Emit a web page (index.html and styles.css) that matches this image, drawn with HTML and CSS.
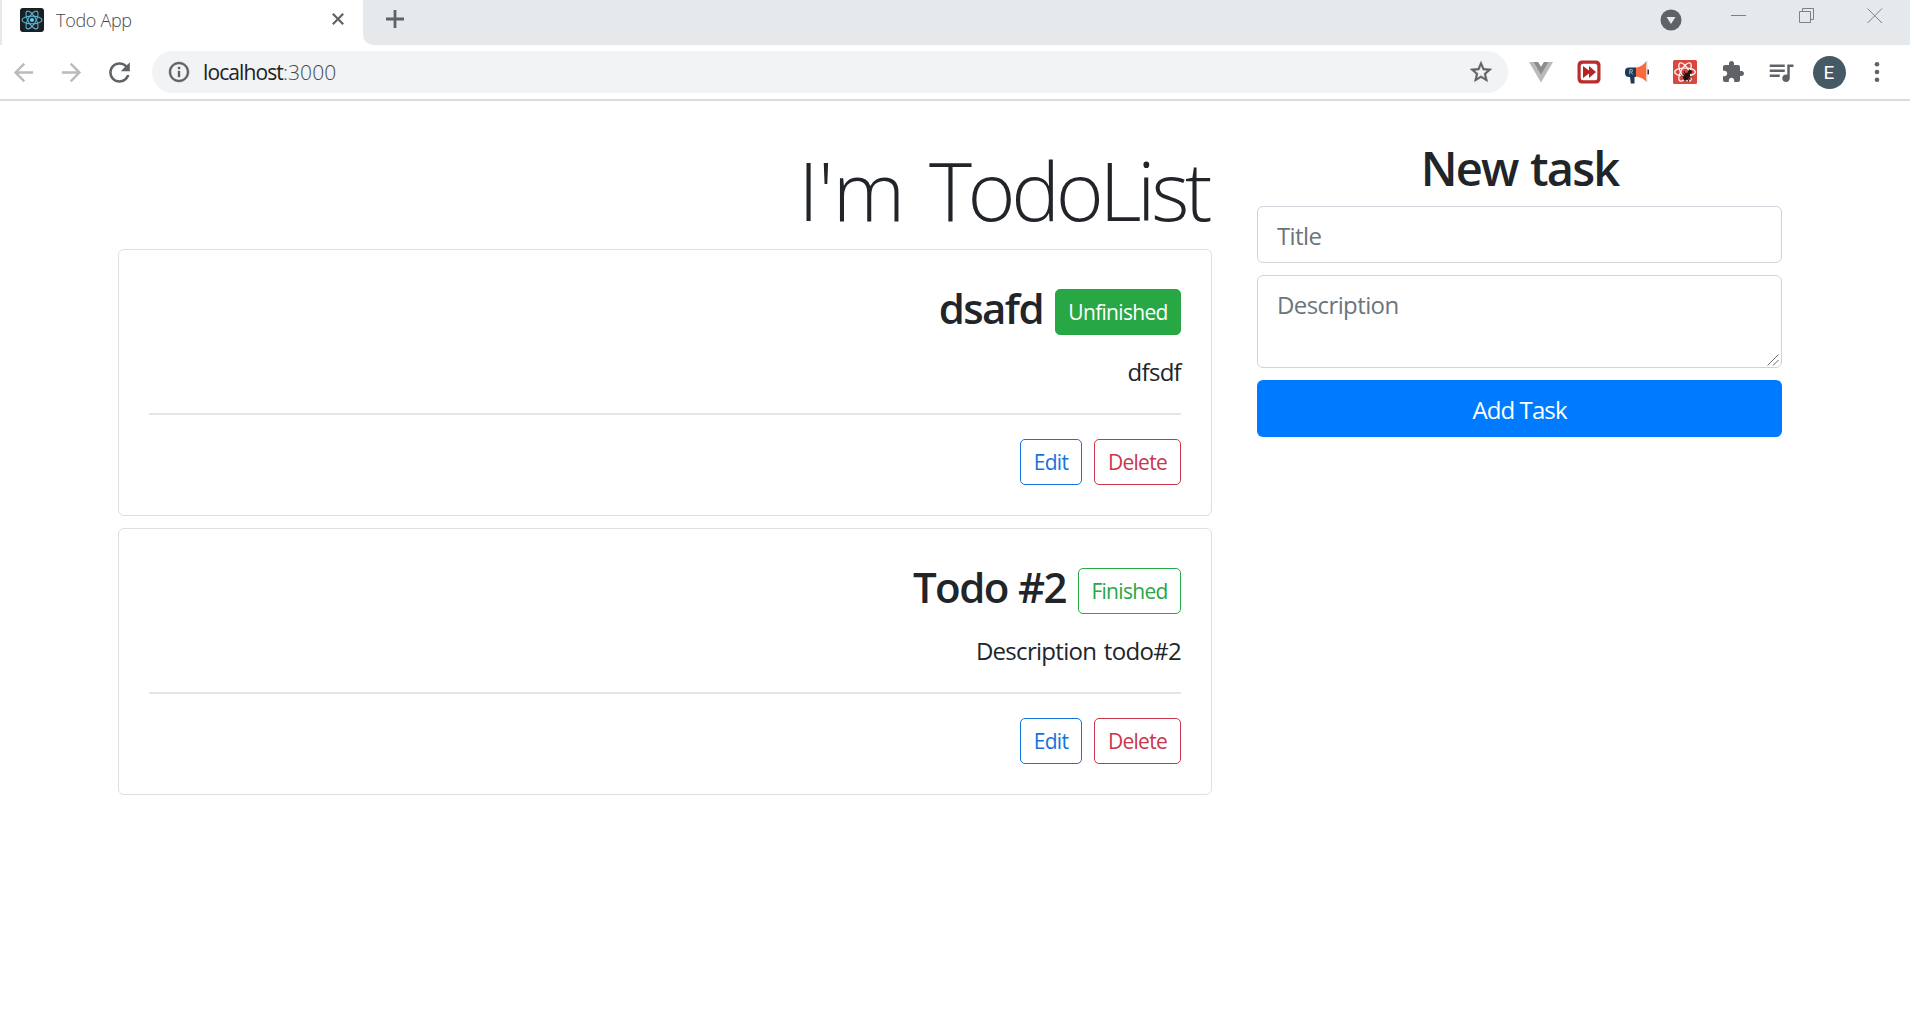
FILE: index.html
```html
<!DOCTYPE html>
<html lang="en">
<head>
<meta charset="utf-8">
<title>Todo App</title>
<link rel="stylesheet" href="styles.css">
</head>
<body>
<header class="browser">
  <div class="tabstrip">
    <div class="tab">
      <svg class="favicon" width="24" height="24" viewBox="0 0 24 24"><rect width="24" height="24" rx="3" fill="#1c1f22"/><g fill="none" stroke="#57b5d3" stroke-width="1.1"><ellipse cx="12" cy="12" rx="10" ry="3.9"/><ellipse cx="12" cy="12" rx="10" ry="3.9" transform="rotate(60 12 12)"/><ellipse cx="12" cy="12" rx="10" ry="3.9" transform="rotate(120 12 12)"/></g><circle cx="12" cy="12" r="2.1" fill="#61cbec"/></svg>
      <span class="tab-title">Todo App</span>
      <svg class="tab-close" width="12" height="12" viewBox="0 0 12 12"><path d="M.8.8l10.4 10.4M11.2.8L.8 11.2" stroke="#5f6368" stroke-width="2.2"/></svg>
    </div>
    <div class="strip">
      <svg class="new-tab" width="18" height="18" viewBox="0 0 18 18"><path d="M9 0v18M0 9h18" stroke="#5f6368" stroke-width="2.8"/></svg>
      <div class="window-controls">
        <svg width="22" height="22" viewBox="0 0 22 22"><circle cx="11" cy="11" r="10.5" fill="#5f6368"/><path d="M6.5 8h9L11 15z" fill="#e8eaed"/></svg>
        <svg class="win" width="16" height="16" viewBox="0 0 16 16"><path d="M0 7.5h15" stroke="#7d8184"/></svg>
        <svg class="win" width="16" height="16" viewBox="0 0 16 16"><path d="M.5 3.5h11v11H.5zM3.5 3.5v-3h11v11h-3" fill="none" stroke="#7d8184"/></svg>
        <svg class="win" width="16" height="16" viewBox="0 0 16 16"><path d="M.5.5l14.500 14.500M15 .5L.5 15" stroke="#7d8184"/></svg>
      </div>
    </div>
  </div>
  <div class="toolbar">
    <div class="slots nav">
      <span><svg width="29" height="29" viewBox="0 0 24 24" fill="#b9bbbd"><path d="M20 11H7.830l5.590-5.590L12 4l-8 8 8 8 1.410-1.410L7.830 13H20v-2z"/></svg></span>
      <span><svg width="29" height="29" viewBox="0 0 24 24" fill="#b9bbbd"><path d="M12 4l-1.410 1.410L16.170 11H4v2h12.170l-5.580 5.590L12 20l8-8z"/></svg></span>
      <span><svg width="31" height="31" viewBox="0 0 24 24" fill="#5f6368"><path d="M17.650 6.350C16.200 4.900 14.210 4 12 4c-4.420 0-7.990 3.580-7.990 8s3.570 8 7.990 8c3.730 0 6.840-2.550 7.730-6h-2.080c-.82 2.330-3.040 4-5.650 4-3.310 0-6-2.690-6-6s2.690-6 6-6c1.660 0 3.140.69 4.220 1.780L13 11h7V4l-2.350 2.350z"/></svg></span>
    </div>
    <div class="omnibox">
      <svg width="24" height="24" viewBox="0 0 24 24" fill="#5f6368"><path d="M11 7h2v2h-2zm0 4h2v6h-2zm1-9C6.480 2 2 6.480 2 12s4.480 10 10 10 10-4.480 10-10S17.520 2 12 2zm0 18c-4.410 0-8-3.590-8-8s3.590-8 8-8 8 3.590 8 8-3.590 8-8 8z" stroke="#5f6368" stroke-width=".4"/></svg>
      <span class="url"><span class="host">localhost</span><span class="port">:3000</span></span>
      <svg class="star" width="26" height="26" viewBox="0 0 24 24" fill="#5f6368"><path d="M22 9.240l-7.190-.62L12 2 9.190 8.630 2 9.240l5.460 4.730L5.820 21 12 17.270 18.180 21l-1.630-7.030L22 9.240zM12 15.400l-3.760 2.270 1-4.280-3.320-2.880 4.380-.38L12 6.100l1.710 4.040 4.380.38-3.320 2.880 1 4.280L12 15.400z" stroke="#5f6368" stroke-width=".4"/></svg>
    </div>
    <div class="slots">
      <span><svg width="24" height="24" viewBox="0 0 24 24"><path d="M0 2h9l3 5 3-5h9L12 22.500z" fill="#b9bab9"/><path d="M4.700 2H9l3 5 3-5h4.300L12 14.500z" fill="#8b8d8c"/></svg></span>
      <span><svg width="24" height="24" viewBox="0 0 24 24"><rect x=".5" y=".5" width="23" height="23" rx="4.500" fill="#b92d2d"/><rect x="3.700" y="3.700" width="16.600" height="16.600" rx="2.500" fill="#fff"/><path d="M6 6l6 4.500V6l7 6-7 6v-4.500L6 18z" fill="#b32424"/></svg></span>
      <span><svg width="24" height="24" viewBox="0 0 24 24"><path d="M22 9.500h1a2.500 2.500 0 0 1 0 5h-1z" fill="#26394d"/><path d="M11 7.500C16 7 19 4 21.500 1v21c-2.500-3-6-5-10.500-5.500z" fill="#fa6a3c"/><path d="M21.300 1h1.200v21h-1.200z" fill="#e9d6cc"/><path d="M4 7.500h7v9.500H9.500v6.500H5.800L5 17H4a4 4 0 0 1-4-4v-1.500a4 4 0 0 1 4-4z" fill="#1f3a56"/><path d="M4.700 14.500v-5h2.600v2.300H4.700M6 12l1.700 2.500" fill="none" stroke="#8fb5cf" stroke-width=".9"/></svg></span>
      <span><svg width="24" height="24" viewBox="0 0 24 24"><rect width="24" height="24" rx="1.500" fill="#d8483e"/><g fill="none" stroke="#fff" stroke-width="1.200"><ellipse cx="12" cy="12" rx="10.300" ry="4"/><ellipse cx="12" cy="12" rx="10.300" ry="4" transform="rotate(60 12 12)"/><ellipse cx="12" cy="12" rx="10.300" ry="4" transform="rotate(120 12 12)"/></g><g transform="rotate(35 14 15)" fill="#25120f"><ellipse cx="14.500" cy="16.500" rx="2.800" ry="4.300"/><circle cx="14.500" cy="10.800" r="2"/><path d="M9.500 13.500l10 6M9.500 19.500l10-6M9.500 16.500h10" stroke="#25120f" stroke-width="1"/></g></svg></span>
      <span><svg width="24" height="24" viewBox="0 0 24 24" fill="#5f6368"><path d="M20.500 11H19V7c0-1.100-.9-2-2-2h-4V3.500C13 2.120 11.880 1 10.500 1S8 2.120 8 3.500V5H4c-1.100 0-1.990.9-1.990 2v3.800H3.500c1.490 0 2.700 1.210 2.700 2.700s-1.210 2.700-2.700 2.700H2V20c0 1.100.9 2 2 2h3.800v-1.500c0-1.490 1.210-2.700 2.700-2.700 1.490 0 2.700 1.210 2.700 2.700V22H17c1.100 0 2-.9 2-2v-4h1.500c1.380 0 2.500-1.120 2.500-2.500S21.880 11 20.500 11z"/></svg></span>
      <span><svg width="30" height="30" viewBox="0 0 24 24" fill="#5f6368"><path d="M15 6H3v2h12V6zm0 4H3v2h12v-2zM3 16h8v-2H3v2zM17 6v8.180c-.31-.11-.65-.18-1-.18-1.660 0-3 1.340-3 3s1.340 3 3 3 3-1.340 3-3V8h3V6h-5z"/></svg></span>
      <span><b class="avatar">E</b></span>
      <span><svg width="6" height="20" viewBox="0 0 6 20" fill="#5f6368"><circle cx="3" cy="2.300" r="2.300"/><circle cx="3" cy="10" r="2.300"/><circle cx="3" cy="17.700" r="2.300"/></svg></span>
    </div>
  </div>
</header>
<main class="page">
  <section class="todos">
    <h1 class="display"><span class="lead">I'm</span> TodoList</h1>
    <article class="card">
      <div class="card-head"><h2 class="name">dsafd</h2><button class="btn success solid unfinished">Unfinished</button></div>
      <p class="desc">dfsdf</p>
      <hr>
      <div class="actions"><button class="btn primary edit">Edit</button><button class="btn danger delete">Delete</button></div>
    </article>
    <article class="card">
      <div class="card-head"><h2 class="name">Todo #2</h2><button class="btn success finished">Finished</button></div>
      <p class="desc">Description todo#2</p>
      <hr>
      <div class="actions"><button class="btn primary edit">Edit</button><button class="btn danger delete">Delete</button></div>
    </article>
  </section>
  <form class="new-task">
    <h2 class="form-title">New task</h2>
    <input class="field" type="text" placeholder="Title">
    <div class="area-wrap">
      <textarea class="field area" placeholder="Description"></textarea>
      <svg class="grip" width="12" height="12" viewBox="0 0 12 12"><path d="M.5 11.500l11-11M6 11.500l5.500-5.500" stroke="#6b6e70"/></svg>
    </div>
    <button class="submit" type="button">Add Task</button>
  </form>
</main>
</body>
</html>
```
FILE: styles.css
```css
* { box-sizing: border-box; }
body { margin: 0; background: #fff; color: #212529; font-family: "Open Sans", "Noto Sans", sans-serif; }
h1, h2, p { margin: 0; }
svg { display: block; flex: none; }
button, input, textarea { font-family: inherit; }

.browser { height: 101px; border-bottom: 2px solid #d9dbdc; }
.tabstrip { display: flex; height: 45px; padding-left: 2px; background: linear-gradient(90deg, #e5e9eb 2px, #fff 2px); }
.tab { display: flex; align-items: flex-start; width: 361px; padding: 8px 19px 0 18px; }
.tab-title { flex: 1; margin-left: 12px; line-height: 24px; font-size: 18px; font-weight: 300; letter-spacing: -0.3px; color: #45494d; }
.tab-close { margin-top: 5px; }
.strip { flex: 1; display: flex; justify-content: space-between; align-items: flex-start; padding: 8px 27px 0 23px; background: #e5e9eb; border-bottom-left-radius: 10px; }
.new-tab { margin-top: 2px; }
.window-controls { display: flex; align-items: flex-start; }
.window-controls .win { margin-left: 52px; }
.window-controls svg:first-child { margin: 1px -3px 0 0; }
.toolbar { display: flex; align-items: center; height: 54px; }
.slots { display: flex; align-items: center; }
.slots span { display: flex; justify-content: center; width: 48px; }
.nav { margin-left: -1px; }
.omnibox { flex: 1; display: flex; align-items: center; height: 42px; margin: 0 9px; padding: 0 14px 0 15px; border-radius: 21px; background: #f1f3f4; }
.slots:last-child { margin-right: 9px; }
.url { flex: 1; margin-left: 12px; font-size: 21px; line-height: 30px; letter-spacing: -0.9px; color: #202124; }
.port { font-weight: 300; letter-spacing: 0.1px; color: #45494d; }
.avatar { width: 33px; height: 33px; border-radius: 50%; background: #455a64; color: #fff; font: 400 19px/33px Roboto, sans-serif; text-align: center; }

.page { display: grid; grid-template-columns: 1094px 525px; column-gap: 45px; padding: 40px 0 0 118px; }
.display { height: 108px; padding: 1px 4px 0 0; font-size: 82px; line-height: 95px; font-weight: 300; letter-spacing: -4.4px; word-spacing: 8px; text-align: right; }
.lead { letter-spacing: -1px; }
.card { height: 267px; margin-bottom: 12px; padding: 35px 30px 0; border: 1px solid #dfdfdf; border-radius: 6px; text-align: right; }
.card-head { display: flex; justify-content: flex-end; height: 62px; }
.name { margin-right: 12px; font-size: 42px; line-height: 45px; font-weight: 600; letter-spacing: -1.6px; word-spacing: 1px; }
.btn { height: 46px; margin-top: 4px; padding: 1px 0 0; border: 1px solid; border-radius: 5px; background: #fff; font-size: 21px; line-height: 43px; letter-spacing: -0.7px; white-space: nowrap; }
.success { color: #28a745; }
.solid { border-color: #28a745; background: #28a745; color: #fff; }
.primary { color: #1573dc; }
.danger { color: #c9364b; }
.unfinished { width: 126px; }
.finished { width: 103px; }
.edit { width: 62px; }
.delete { width: 87px; }
.desc { height: 66px; font-size: 24px; line-height: 50px; letter-spacing: -0.7px; word-spacing: 2px; }
hr { margin: 0; height: 2px; border: 0; background: #e5e5e5; }
.actions { display: flex; justify-content: flex-end; gap: 12px; margin-top: 20px; }

.new-task { display: flex; flex-direction: column; }
.form-title { height: 65px; font-size: 47px; line-height: 54px; font-weight: 600; letter-spacing: -1.8px; word-spacing: 2px; text-align: center; }
.field { display: block; width: 100%; height: 57px; margin: 0 0 12px; padding: 2px 19px 0; border: 1px solid #ced4da; border-radius: 6px; font-size: 24px; letter-spacing: -0.6px; outline: 0; }
.field::placeholder { color: #6c757d; }
.area-wrap { position: relative; }
.area { height: 93px; padding-top: 11px; line-height: 36px; resize: none; }
.grip { position: absolute; right: 3px; bottom: 14px; }
.submit { height: 57px; padding: 2px 0 0; border: 0; border-radius: 6px; background: #007bff; color: #fff; font-size: 24px; letter-spacing: -0.9px; }
```
